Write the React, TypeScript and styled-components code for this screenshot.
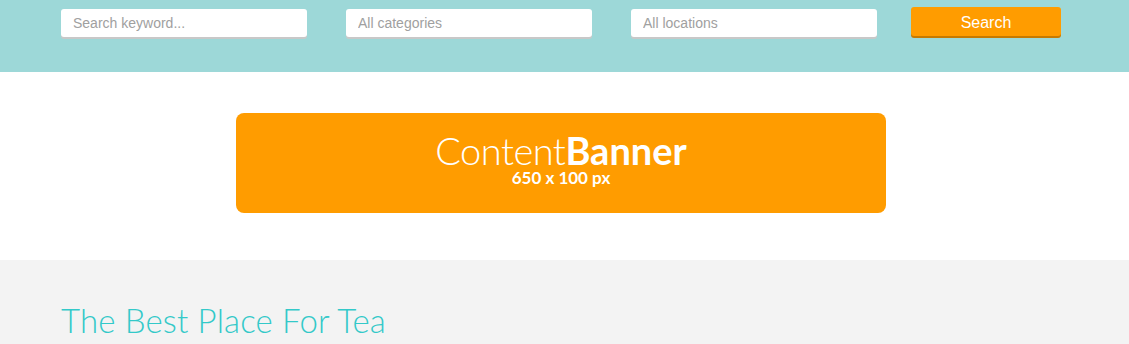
import React from "react";
import styled, { createGlobalStyle } from "styled-components";

const Global = createGlobalStyle`
  html, body { margin: 0; padding: 0; background: #fff; }
  body { font-family: "Liberation Sans", Arial, sans-serif; }
  * { box-sizing: border-box; }
`;

const Header = styled.header`
  background: #9dd8d8;
  height: 72px;
  padding: 7px 0 0 61px;
`;

const SearchRow = styled.form`
  display: flex;
  align-items: flex-start;
`;

const Field = styled.div<{ $gap: number }>`
  width: 246px;
  margin-right: ${(p) => p.$gap}px;
  padding-top: 2px;
`;

const Input = styled.input`
  display: block;
  width: 100%;
  height: 28px;
  border: none;
  border-radius: 3px;
  background: #fff;
  box-shadow: 0 2px 0 #c8c8c8;
  padding: 0 12px;
  font-family: "Liberation Sans", Arial, sans-serif;
  font-size: 14px;
  color: #555;
  outline: none;
  &::placeholder { color: #a0a0a0; }
`;

const Button = styled.button`
  width: 150px;
  height: 29px;
  border: none;
  border-radius: 3px;
  background: #ff9c00;
  box-shadow: 0 2px 0 #c77a00;
  color: #fff;
  font-family: "Liberation Sans", Arial, sans-serif;
  font-size: 16px;
  padding: 2px 0 0;
  cursor: pointer;
`;

const BannerSection = styled.section`
  height: 188px;
  padding: 41px 0 0 236px;
  background: #fff;
`;

const Banner = styled.div`
  width: 650px;
  height: 100px;
  border-radius: 8px;
  background: #ff9c00;
  color: #fff;
  display: flex;
  flex-direction: column;
  align-items: center;
  padding-top: 21px;
  font-family: Lato, "Open Sans", sans-serif;
`;

const BannerTitle = styled.div`
  font-size: 38px;
  line-height: 32px;
  font-weight: 300;
  letter-spacing: -0.5px;
  b { font-weight: 700; letter-spacing: 0; }
`;

const BannerSize = styled.div`
  font-size: 17px;
  line-height: 18px;
  font-weight: 700;
  margin-top: 3px;
`;

const Feature = styled.section`
  background: #f3f3f3;
  padding: 40px 0 0 61px;
  min-height: 84px;
`;

const Heading = styled.h2`
  margin: 0;
  font-family: Lato, "Open Sans", sans-serif;
  font-weight: 300;
  font-size: 33px;
  line-height: 40px;
  letter-spacing: 0.15px;
  color: #33c9c9;
`;

export default function App() {
  return (
    <>
      <Global />
      <Header>
        <SearchRow onSubmit={(e) => e.preventDefault()}>
          <Field $gap={39}>
            <Input placeholder="Search keyword..." />
          </Field>
          <Field $gap={39}>
            <Input placeholder="All categories" />
          </Field>
          <Field $gap={34}>
            <Input placeholder="All locations" />
          </Field>
          <Button type="submit">Search</Button>
        </SearchRow>
      </Header>
      <BannerSection>
        <Banner>
          <BannerTitle>
            Content<b>Banner</b>
          </BannerTitle>
          <BannerSize>650 x 100 px</BannerSize>
        </Banner>
      </BannerSection>
      <Feature>
        <Heading>The Best Place For Tea</Heading>
      </Feature>
    </>
  );
}
